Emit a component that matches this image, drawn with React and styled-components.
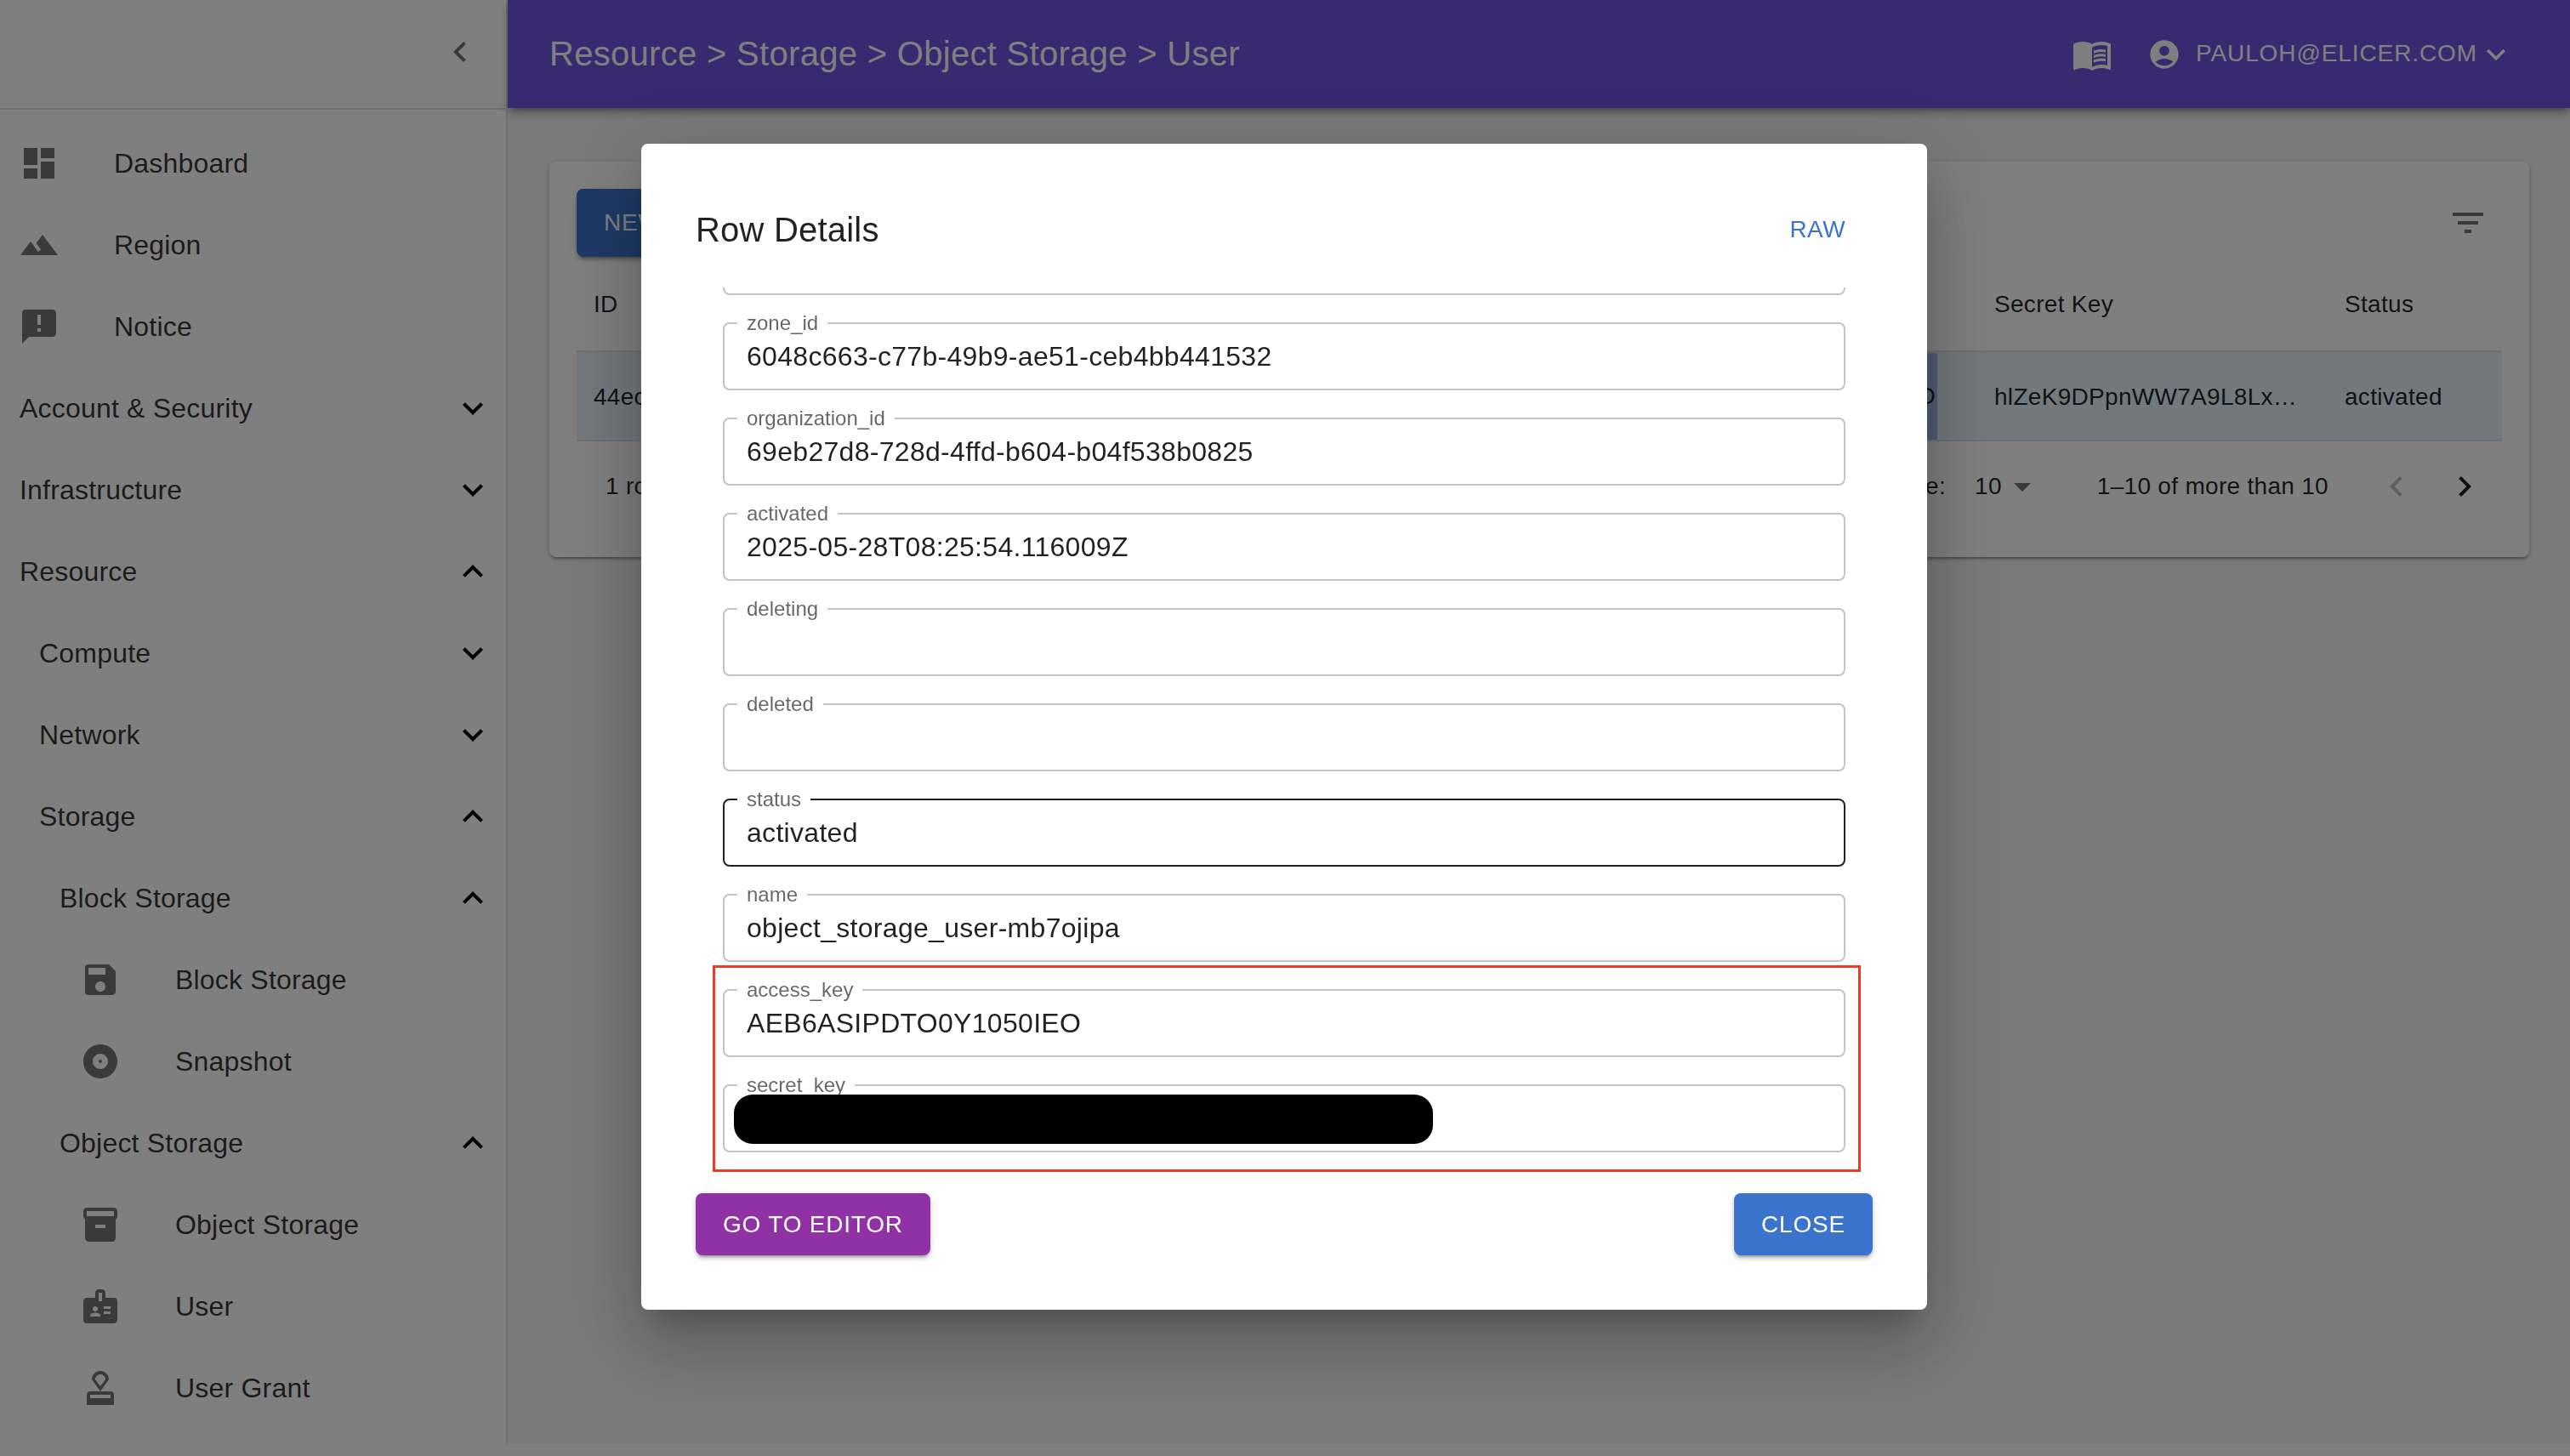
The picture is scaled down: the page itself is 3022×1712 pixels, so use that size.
import React from 'react';
import styled, { createGlobalStyle } from 'styled-components';
import {
  MdDashboard, MdTerrain, MdAnnouncement, MdExpandMore, MdExpandLess, MdSave, MdAlbum,
  MdInventory2, MdBadge, MdApproval, MdMenuBook, MdAccountCircle, MdFilterList,
  MdChevronLeft, MdChevronRight, MdArrowDropDown,
} from 'react-icons/md';

const GlobalStyle = createGlobalStyle`
  html, body {
    margin: 0;
    padding: 0;
    background: #fff;
  }
  body {
    font-family: "Liberation Sans", Arial, sans-serif;
    color: rgba(0, 0, 0, 0.87);
    overflow: hidden;
  }
`;

const Shell = styled.div`
  display: grid;
  grid-template-columns: 597px 1fr;
  height: 1697px;
`;

const Sidebar = styled.aside`
  background: #fff;
  border-right: 2px solid #e0e0e0;
  box-sizing: border-box;
`;

const SidebarTop = styled.div`
  height: 129px;
  box-sizing: border-box;
  border-bottom: 2px solid #e0e0e0;
  display: flex;
  align-items: center;
  justify-content: flex-end;
  padding: 0 30px 6px 0;
  color: rgba(0, 0, 0, 0.54);
  font-size: 48px;
`;

const Nav = styled.nav`
  display: flex;
  flex-direction: column;
  padding-top: 15px;
`;

const NavRow = styled.div`
  height: 96px;
  display: flex;
  align-items: center;
  padding: 0 15px 0 ${(p) => p.$indent}px;
`;

const NavIcon = styled.span`
  width: 112px;
  flex: none;
  display: flex;
  font-size: 48px;
  color: rgba(0, 0, 0, 0.54);
`;

const NavLabel = styled.span`
  flex: 1;
  font-size: 32px;
  letter-spacing: 0.2px;
  color: rgba(0, 0, 0, 0.8);
`;

const NavChevron = styled.span`
  display: flex;
  font-size: 48px;
  color: #000;
`;

const Main = styled.div`
  background: #f5f5f5;
  display: flex;
  flex-direction: column;
  min-width: 0;
`;

const Header = styled.header`
  height: 127px;
  flex: none;
  background: #7054e0;
  color: #fff;
  display: flex;
  align-items: center;
  padding: 0 65px 0 49px;
  box-shadow: 0 4px 8px -2px rgba(0, 0, 0, 0.4), 0 8px 10px rgba(0, 0, 0, 0.14);
  position: relative;
`;

const Crumbs = styled.div`
  flex: 1;
  font-size: 40px;
  letter-spacing: 0.3px;
`;

const HeaderIcon = styled.span`
  display: flex;
  font-size: ${(p) => p.$size}px;
  margin-right: ${(p) => p.$gap}px;
`;

const UserName = styled.span`
  font-size: 28px;
  letter-spacing: 0.9px;
  margin-top: -2px;
`;

const Content = styled.main`
  padding: 63px 48px 0 49px;
`;

const Card = styled.section`
  background: #fff;
  border-radius: 8px;
  height: 465px;
  box-sizing: border-box;
  padding: 32px 32px 0;
  box-shadow: 0 4px 2px -2px rgba(0, 0, 0, 0.2), 0 2px 4px rgba(0, 0, 0, 0.14), 0 2px 6px rgba(0, 0, 0, 0.12);
`;

const CardToolbar = styled.div`
  height: 80px;
  display: flex;
  justify-content: space-between;
  align-items: center;
  padding-right: 16px;
`;

const Button = styled.button`
  height: ${(p) => p.$height || 73}px;
  border: 0;
  border-radius: 8px;
  padding: 0 32px;
  background: ${(p) => p.$color};
  color: #fff;
  font: inherit;
  font-size: 28px;
  letter-spacing: 0.8px;
  box-shadow: 0 6px 2px -4px rgba(0, 0, 0, 0.2), 0 4px 4px rgba(0, 0, 0, 0.14), 0 2px 10px rgba(0, 0, 0, 0.12);
`;

const FilterIcon = styled.span`
  display: flex;
  font-size: 48px;
  color: rgba(0, 0, 0, 0.54);
`;

const TableRow = styled.div`
  display: grid;
  grid-template-columns: 1fr 412px 205px;
  align-items: center;
  font-size: 28px;
  letter-spacing: 0.3px;
  height: ${(p) => p.$height}px;
  box-sizing: border-box;
  ${(p) => p.$selected && `
    background: #e4f0f8;
    border-top: 2px solid #e0e0e0;
    border-bottom: 2px solid #e0e0e0;
  `}
`;

const Cell = styled.div`
  padding: 2px 0 0 20px;
  white-space: nowrap;
  overflow: hidden;
`;

const BlueCell = styled.div`
  justify-self: end;
  height: 102px;
  width: 420px;
  margin-right: 47px;
  background: #9ebaea;
  display: flex;
  align-items: center;
  justify-content: flex-end;
  padding-right: 2px;
  box-sizing: border-box;
`;

const IdGroup = styled.div`
  display: flex;
  justify-content: space-between;
  align-items: center;
  height: 100%;
`;

const Pager = styled.div`
  height: 106px;
  display: flex;
  align-items: center;
  padding: 0 20px 0 34px;
  font-size: 28px;
  letter-spacing: 0.3px;
`;

const PagerNote = styled.span`
  flex: 1;
`;

const PagerSelect = styled.span`
  display: flex;
  align-items: center;
  margin: 0 64px 0 34px;
`;

const PagerButton = styled.span`
  display: flex;
  font-size: 48px;
  margin-left: ${(p) => p.$gap}px;
  color: ${(p) => (p.$off ? 'rgba(0, 0, 0, 0.26)' : 'rgba(0, 0, 0, 0.87)')};
`;

const DropIcon = styled.span`
  display: flex;
  font-size: 48px;
  color: rgba(0, 0, 0, 0.54);
`;

const Backdrop = styled.div`
  position: fixed;
  inset: 0;
  background: rgba(0, 0, 0, 0.5);
  display: flex;
  align-items: center;
  justify-content: center;
  padding: 0 2px 3px 0;
  box-sizing: border-box;
`;

const Dialog = styled.div`
  width: 1512px;
  height: 1371px;
  box-sizing: border-box;
  background: #fff;
  border-radius: 8px;
  padding: 64px;
  display: flex;
  flex-direction: column;
  box-shadow: 0 22px 30px -14px rgba(0, 0, 0, 0.2), 0 48px 76px 6px rgba(0, 0, 0, 0.14), 0 18px 92px 16px rgba(0, 0, 0, 0.12);
`;

const DialogHead = styled.div`
  height: 74px;
  flex: none;
  margin-bottom: 31px;
  display: flex;
  align-items: center;
  justify-content: space-between;
  padding: 0 32px 0 0;
`;

const DialogTitle = styled.h2`
  margin: 0;
  font-size: 40px;
  font-weight: 400;
  letter-spacing: 0.2px;
`;

const RawLink = styled.span`
  color: #3a74cc;
  font-size: 28px;
  letter-spacing: 0.4px;
`;

const Scroller = styled.div`
  flex: 1;
  min-height: 0;
  overflow: hidden;
  padding: 0 32px;
`;

const FieldList = styled.div`
  display: flex;
  flex-direction: column;
  gap: 21px;
  margin-top: -82px;
`;

const FieldSet = styled.fieldset`
  margin: 0;
  padding: 0 26px;
  height: 91px;
  box-sizing: border-box;
  border: 2px solid ${(p) => (p.$active ? 'rgba(0, 0, 0, 0.87)' : '#c4c4c4')};
  border-radius: 8px;
  min-width: 0;
`;

const FieldLabel = styled.legend`
  margin-left: -11px;
  padding: 0 11px;
  font-size: 24px;
  line-height: 24px;
  min-height: 24px;
  color: rgba(0, 0, 0, 0.6);
`;

const FieldValue = styled.div`
  height: 54px;
  line-height: 54px;
  font-size: 32px;
  letter-spacing: 0.3px;
`;

const KeyGroup = styled.div`
  position: relative;
  display: flex;
  flex-direction: column;
  gap: 21px;
`;

const RedBox = styled.div`
  position: absolute;
  top: -17px;
  left: -12px;
  right: -18px;
  bottom: -23px;
  border: 3px solid #ef3b24;
  pointer-events: none;
`;

const Redaction = styled.div`
  position: absolute;
  top: 135px;
  left: 13px;
  width: 822px;
  height: 58px;
  border-radius: 22px;
  background: #000;
`;

const DialogActions = styled.div`
  flex: none;
  margin-top: 16px;
  display: flex;
  justify-content: space-between;
`;

const navItems = [
  { label: 'Dashboard', indent: 22, icon: MdDashboard },
  { label: 'Region', indent: 22, icon: MdTerrain },
  { label: 'Notice', indent: 22, icon: MdAnnouncement },
  { label: 'Account & Security', indent: 23, open: false },
  { label: 'Infrastructure', indent: 23, open: false },
  { label: 'Resource', indent: 23, open: true },
  { label: 'Compute', indent: 46, open: false },
  { label: 'Network', indent: 46, open: false },
  { label: 'Storage', indent: 46, open: true },
  { label: 'Block Storage', indent: 70, open: true },
  { label: 'Block Storage', indent: 94, icon: MdSave },
  { label: 'Snapshot', indent: 94, icon: MdAlbum },
  { label: 'Object Storage', indent: 70, open: true },
  { label: 'Object Storage', indent: 94, icon: MdInventory2 },
  { label: 'User', indent: 94, icon: MdBadge },
  { label: 'User Grant', indent: 94, icon: MdApproval },
];

// first one is scrolled almost out of view, only its bottom border shows
const fields = [
  { label: '', value: '' },
  { label: 'zone_id', value: '6048c663-c77b-49b9-ae51-ceb4bb441532' },
  { label: 'organization_id', value: '69eb27d8-728d-4ffd-b604-b04f538b0825' },
  { label: 'activated', value: '2025-05-28T08:25:54.116009Z' },
  { label: 'deleting', value: '' },
  { label: 'deleted', value: '' },
  { label: 'status', value: 'activated', active: true },
  { label: 'name', value: 'object_storage_user-mb7ojipa' },
];

const Field = ({ label, value, active }) => (
  <FieldSet $active={active}>
    <FieldLabel>{label}</FieldLabel>
    <FieldValue>{value}</FieldValue>
  </FieldSet>
);

export default function App() {
  return (
    <>
      <GlobalStyle />
      <Shell>
        <Sidebar>
          <SidebarTop><MdChevronLeft /></SidebarTop>
          <Nav>
            {navItems.map((item, i) => (
              <NavRow key={i} $indent={item.indent}>
                {item.icon && <NavIcon><item.icon /></NavIcon>}
                <NavLabel>{item.label}</NavLabel>
                {item.open !== undefined && (
                  <NavChevron>{item.open ? <MdExpandLess /> : <MdExpandMore />}</NavChevron>
                )}
              </NavRow>
            ))}
          </Nav>
        </Sidebar>
        <Main>
          <Header>
            <Crumbs>Resource &gt; Storage &gt; Object Storage &gt; User</Crumbs>
            <HeaderIcon $size={48} $gap={41}><MdMenuBook /></HeaderIcon>
            <HeaderIcon $size={40} $gap={17}><MdAccountCircle /></HeaderIcon>
            <UserName>PAULOH@ELICER.COM</UserName>
            <HeaderIcon $size={44} $gap={0}><MdExpandMore /></HeaderIcon>
          </Header>
          <Content>
            <Card>
              <CardToolbar>
                <Button $color="#3a74cc" $height={80}>NEW</Button>
                <FilterIcon><MdFilterList /></FilterIcon>
              </CardToolbar>
              <TableRow $height={110}>
                <Cell>ID</Cell>
                <Cell>Secret Key</Cell>
                <Cell>Status</Cell>
              </TableRow>
              <TableRow $height={107} $selected>
                <IdGroup>
                  <Cell>44ec</Cell>
                  <BlueCell>AEB6ASIPDTO0Y1050IEO</BlueCell>
                </IdGroup>
                <Cell>hlZeK9DPpnWW7A9L8Lx…</Cell>
                <Cell>activated</Cell>
              </TableRow>
              <Pager>
                <PagerNote>1 row selected</PagerNote>
                <span>Rows per page:</span>
                <PagerSelect>10<DropIcon><MdArrowDropDown /></DropIcon></PagerSelect>
                <span>1–10 of more than 10</span>
                <PagerButton $off $gap={56}><MdChevronLeft /></PagerButton>
                <PagerButton $gap={32}><MdChevronRight /></PagerButton>
              </Pager>
            </Card>
          </Content>
        </Main>
      </Shell>
      <Backdrop>
        <Dialog>
          <DialogHead>
            <DialogTitle>Row Details</DialogTitle>
            <RawLink>RAW</RawLink>
          </DialogHead>
          <Scroller>
            <FieldList>
              {fields.map((f, i) => (
                <Field key={i} {...f} />
              ))}
              <KeyGroup>
                <Field label="access_key" value="AEB6ASIPDTO0Y1050IEO" />
                <Field label="secret_key" value="" />
                <Redaction />
                <RedBox />
              </KeyGroup>
            </FieldList>
          </Scroller>
          <DialogActions>
            <Button $color="#9032a6">GO TO EDITOR</Button>
            <Button $color="#3a74cc">CLOSE</Button>
          </DialogActions>
        </Dialog>
      </Backdrop>
    </>
  );
}
